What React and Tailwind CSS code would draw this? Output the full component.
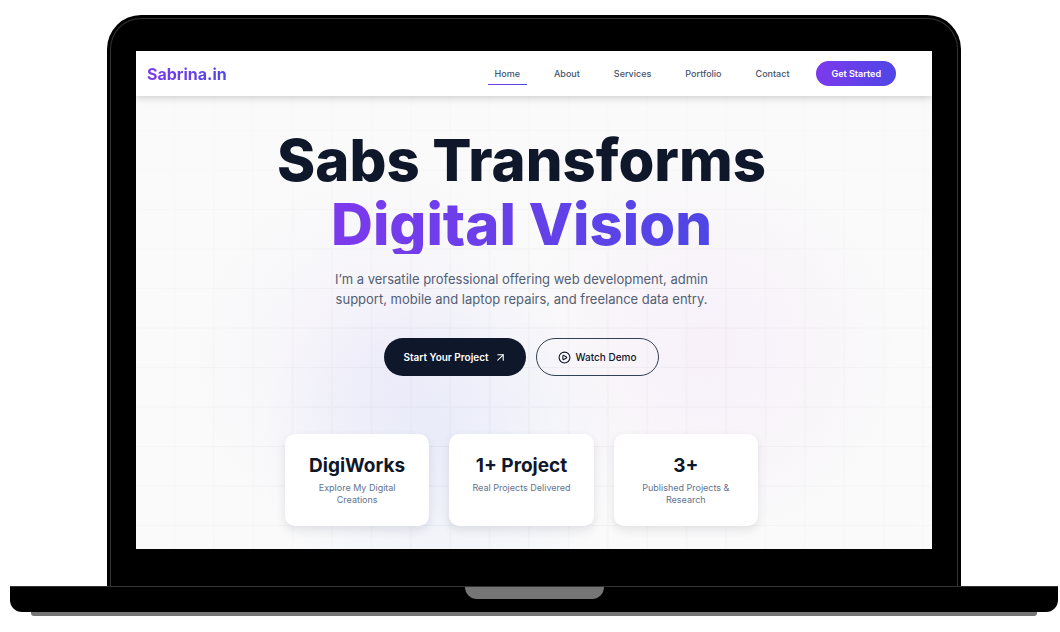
import { ArrowUpRight, CirclePlay } from "lucide-react";

const links = ["Home", "About", "Services", "Portfolio", "Contact"];

const stats = [
  { value: "DigiWorks", label: "Explore My Digital Creations" },
  { value: "1+ Project", label: "Real Projects Delivered" },
  { value: "3+", label: "Published Projects & Research" },
];

function Backdrop() {
  return (
    <svg className="absolute inset-0 h-full w-full" aria-hidden="true">
      <defs>
        <radialGradient id="violet">
          <stop offset="0" stopColor="#8b5cf6" stopOpacity="0.06" />
          <stop offset="0.5" stopColor="#8b5cf6" stopOpacity="0.03" />
          <stop offset="1" stopColor="#8b5cf6" stopOpacity="0" />
        </radialGradient>
        <radialGradient id="blue">
          <stop offset="0" stopColor="#3b6cf6" stopOpacity="0.07" />
          <stop offset="0.5" stopColor="#3b6cf6" stopOpacity="0.04" />
          <stop offset="1" stopColor="#3b6cf6" stopOpacity="0" />
        </radialGradient>
        <radialGradient id="pink">
          <stop offset="0" stopColor="#c946ef" stopOpacity="0.055" />
          <stop offset="0.5" stopColor="#c946ef" stopOpacity="0.03" />
          <stop offset="1" stopColor="#c946ef" stopOpacity="0" />
        </radialGradient>
        <pattern id="cells" y="1" width="39.4" height="39.5" patternUnits="userSpaceOnUse">
          <path d="M38.4 0V39.5M0 39H39.4" stroke="#0f172a" strokeOpacity="0.045" fill="none" />
        </pattern>
        <radialGradient id="fade" cx="0.5" cy="0.72" r="0.65">
          <stop offset="0" stopColor="#fff" />
          <stop offset="0.5" stopColor="#fff" stopOpacity="0.75" />
          <stop offset="1" stopColor="#fff" stopOpacity="0.2" />
        </radialGradient>
        <mask id="spot">
          <rect width="100%" height="100%" fill="url(#fade)" />
        </mask>
      </defs>
      <circle cx="31%" cy="62%" r="190" fill="url(#violet)" />
      <circle cx="38%" cy="80%" r="180" fill="url(#blue)" />
      <circle cx="72%" cy="60%" r="190" fill="url(#pink)" />
      <rect width="100%" height="100%" fill="url(#cells)" mask="url(#spot)" />
    </svg>
  );
}

function Navbar() {
  return (
    <header className="relative flex h-[45px] items-center justify-between bg-white pr-9 pl-[11px] shadow-[0_1px_8px_rgba(0,0,0,0.22)]">
      <a
        href="#home"
        className="bg-linear-to-r/srgb from-[#7c3aed] to-[#4f46e5] bg-clip-text text-[16px] leading-5 font-bold text-transparent"
      >
        Sabrina.in
      </a>
      <nav className="flex items-center gap-5 text-[9px] leading-3 font-medium text-slate-600">
        {links.map((name, i) => (
          <a key={name} href={"#" + name.toLowerCase()} className="relative px-[7px] py-1">
            {name}
            {i === 0 && (
              <span className="absolute inset-x-0 -bottom-px h-px bg-linear-to-r/srgb from-[#7c3aed] to-[#4f46e5]" />
            )}
          </a>
        ))}
        <button
          type="button"
          className="h-[25px] rounded-full bg-linear-to-r/srgb from-[#7c3aed] to-[#4f46e5] px-[15px] font-semibold text-white"
        >
          Get Started
        </button>
      </nav>
    </header>
  );
}

function Hero() {
  return (
    <main className="relative flex flex-col items-center pt-[34px] pr-[25px] pb-[23px] text-center">
      <h1 className="flex flex-col items-center gap-1 text-[58px] leading-[60px] font-extrabold text-[#0f172a]">
        <span>Sabs Transforms</span>
        <span className="bg-linear-to-r/srgb from-[#7c3aed] to-[#4f46e5] bg-clip-text text-transparent">
          Digital Vision
        </span>
      </h1>
      <p className="mt-[15px] max-w-[400px] text-[13px] leading-5 text-[#526075]">
        I’m a versatile professional offering web development, admin support, mobile and laptop
        repairs, and freelance data entry.
      </p>
      <div className="mt-[29px] flex gap-[10px] text-[10px] leading-4">
        <button
          type="button"
          className="flex h-[38px] items-center gap-[5px] rounded-full bg-[#0f172a] px-[19px] font-semibold text-white"
        >
          Start Your Project
          <ArrowUpRight size={13} strokeWidth={2} />
        </button>
        <button
          type="button"
          className="flex h-[38px] items-center gap-[5px] rounded-full border border-[#334155] px-[21px] font-medium text-[#0f172a]"
        >
          <CirclePlay size={13} strokeWidth={2} />
          Watch Demo
        </button>
      </div>
      <ul className="mt-[58px] grid w-full max-w-[473px] grid-cols-3 gap-5">
        {stats.map((s) => (
          <li
            key={s.value}
            className="rounded-[10px] bg-white px-5 py-5 shadow-[0_4px_10px_rgba(15,23,42,0.1)]"
          >
            <p className="text-[19px] leading-6 font-bold whitespace-nowrap text-[#0f172a]">{s.value}</p>
            <p className="mt-1 text-[9px] leading-3 text-slate-500">{s.label}</p>
          </li>
        ))}
      </ul>
    </main>
  );
}

export default function App() {
  return (
    <div className="min-h-screen bg-white pt-[15px] pr-[2px] pl-[10px] font-['Inter','Liberation_Sans',sans-serif]">
      <div className="mx-[97px] rounded-t-[34px] bg-black px-[3px] pt-[3px]">
        <div className="rounded-t-[31px] border border-b-0 border-[#333] px-[25px] pt-8 pb-[37px]">
          <div className="relative overflow-hidden bg-[#fafafa]">
            <Backdrop />
            <Navbar />
            <Hero />
          </div>
        </div>
      </div>
      <div className="flex h-[26px] justify-center rounded-b-xl border-t border-[#333] bg-black">
        <div className="h-3 w-[139px] rounded-b-xl bg-[#757575]" />
      </div>
      <div className="mx-[21px] h-1 rounded-b-[3px] bg-[#757575]" />
    </div>
  );
}
